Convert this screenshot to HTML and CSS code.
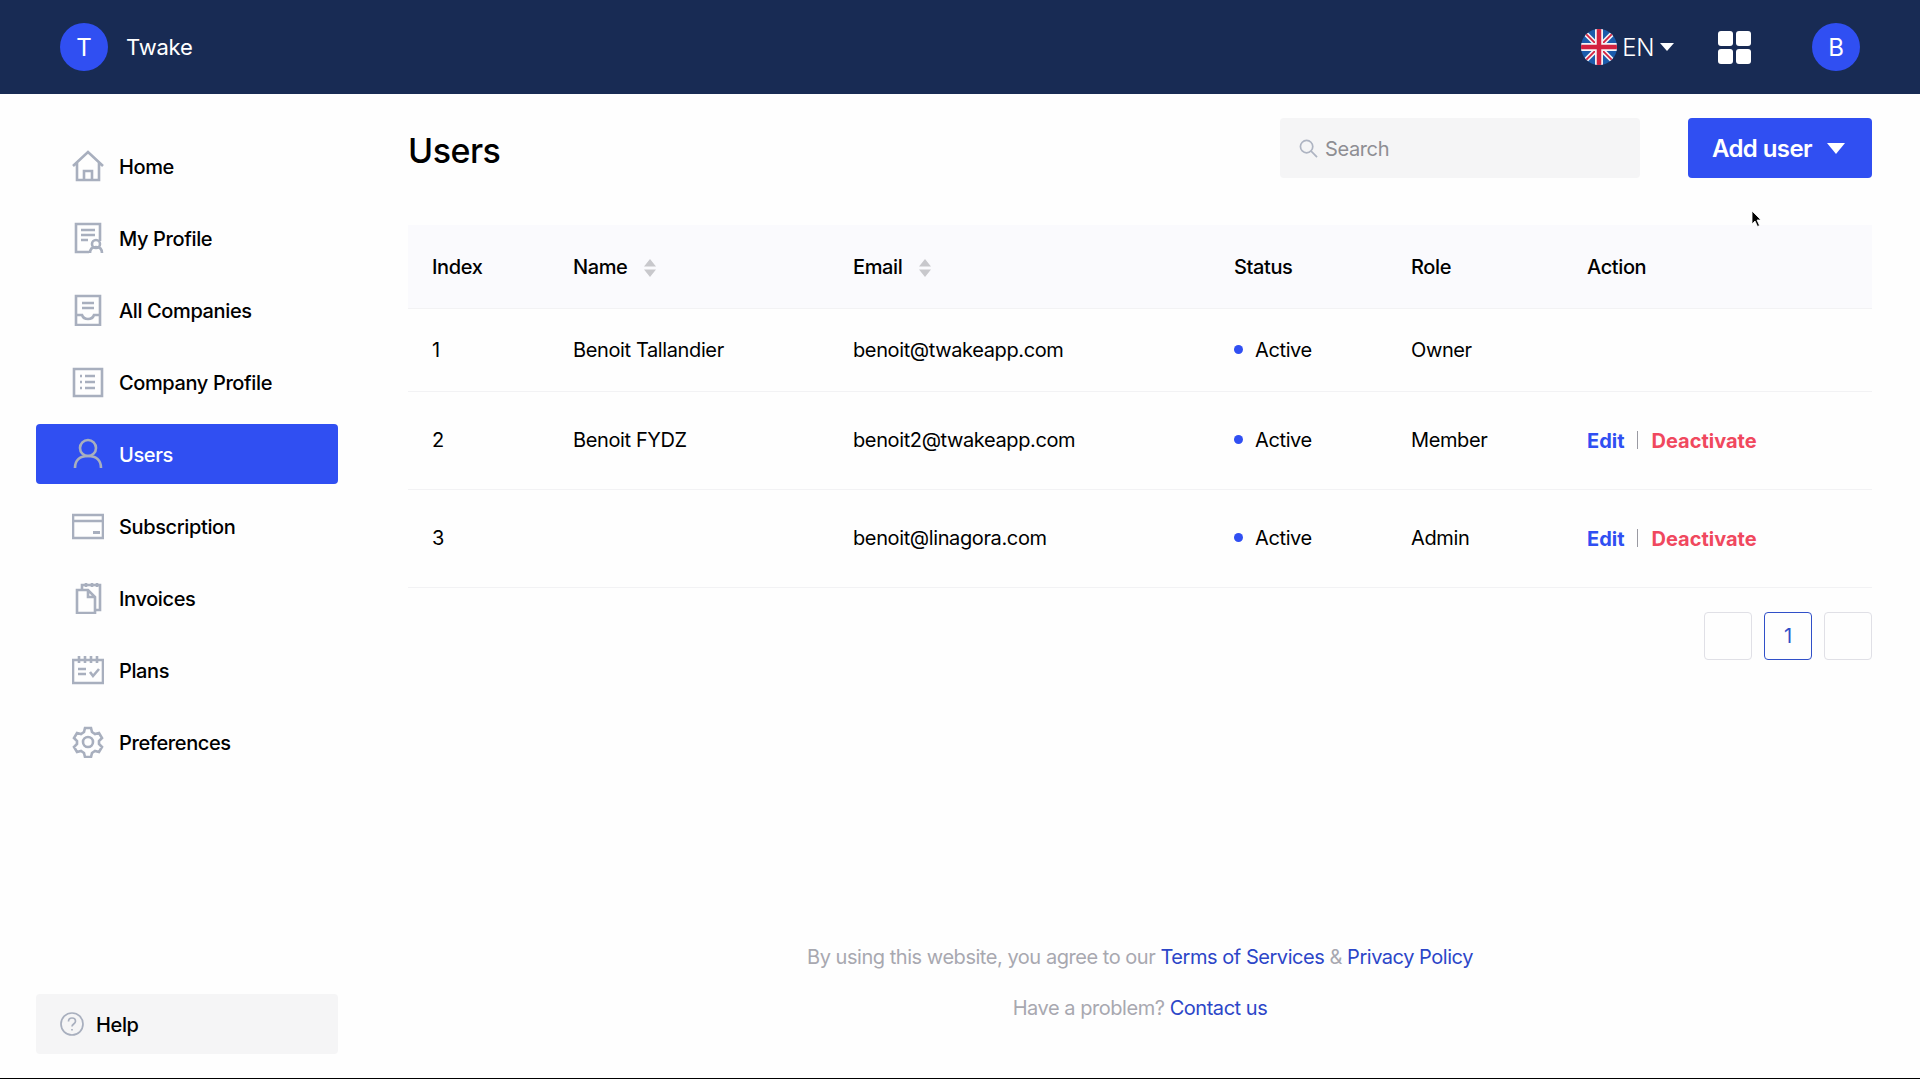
FILE: index.html
```html
<!DOCTYPE html>
<html lang="en">
<head>
  <meta charset="UTF-8">
  <title>Users - Twake</title>
  <link rel="stylesheet" href="styles.css">
</head>
<body>
  <header class="topbar">
    <div class="brand">
      <span class="avatar">T</span>
      <span class="brand-name">Twake</span>
    </div>
    <div class="topbar-right">
      <div class="lang">
        <svg class="flag" viewBox="0 0 36 36">
          <defs><clipPath id="flag-clip"><circle cx="18" cy="18" r="18"/></clipPath></defs>
          <g clip-path="url(#flag-clip)">
            <rect width="36" height="36" fill="#1b5bab"/>
            <path d="M0 0L36 36M36 0L0 36" stroke="#f4f4f6" stroke-width="5"/>
            <path d="M0 0L36 36M36 0L0 36" stroke="#d32240" stroke-width="1.800"/>
            <path d="M18 0V36M0 18H36" stroke="#f4f4f6" stroke-width="8"/>
            <path d="M18 0V36M0 18H36" stroke="#d32240" stroke-width="4.500"/>
          </g>
        </svg>
        <span class="lang-code">EN</span>
        <span class="caret caret-small"></span>
      </div>
      <div class="apps">
        <span></span><span></span><span></span><span></span>
      </div>
      <span class="avatar">B</span>
    </div>
  </header>

  <div class="layout">
    <aside class="sidebar">
      <nav class="nav">
        <a class="nav-item">
          <svg class="nav-icon" viewBox="0 0 32 32"><path d="M1 16L16 2l15 14M5 13v17h22V13M12 30v-9h8v9"/></svg>
          <span>Home</span>
        </a>
        <a class="nav-item">
          <svg class="nav-icon" viewBox="0 0 32 32"><path d="M17 30H4V2h24v17M9 8h14M9 13h14M9 18h7"/><circle cx="24" cy="22" r="4"/><path d="M18 31c0-4 2.500-6 6-6s6 2 6 6"/></svg>
          <span>My Profile</span>
        </a>
        <a class="nav-item">
          <svg class="nav-icon" viewBox="0 0 32 32"><path d="M4 2h24v29H4zM10 9h12M10 14h12M4 21h6c1 3 3 4 6 4s5-1 6-4h6"/></svg>
          <span>All Companies</span>
        </a>
        <a class="nav-item">
          <svg class="nav-icon" viewBox="0 0 32 32"><path d="M2 3h28v27H2zM13 10h10M13 16h10M13 22h10M8 10h2M8 16h2M8 22h2"/></svg>
          <span>Company Profile</span>
        </a>
        <a class="nav-item active">
          <svg class="nav-icon" viewBox="0 0 32 32"><circle cx="16" cy="10" r="8"/><path d="M3 30c0-8 5-12 13-12s13 4 13 12"/></svg>
          <span>Users</span>
        </a>
        <a class="nav-item">
          <svg class="nav-icon" viewBox="0 0 32 32"><path d="M1 5h30v23H1zM1 11h30"/><path class="solid" d="M21 21h7v3h-7z"/></svg>
          <span>Subscription</span>
        </a>
        <a class="nav-item">
          <svg class="nav-icon" viewBox="0 0 32 32"><path d="M10 7V3h18v25h-5M14 1v4M20 1v4M25 1v4"/><path d="M5 8h11l7 7v16H5zM16 8v7h7"/></svg>
          <span>Invoices</span>
        </a>
        <a class="nav-item">
          <svg class="nav-icon" viewBox="0 0 32 32"><path d="M1 6h30v23H1zM7 2v7M13 2v7M19 2v7M25 2v7M6 15h8M6 20h8M18 18l3 4 6-7"/></svg>
          <span>Plans</span>
        </a>
        <a class="nav-item">
          <svg class="nav-icon" viewBox="0 0 32 32"><circle cx="16" cy="16" r="5"/><path d="M13 2h6l1 4 3 2 4-1 3 5-3 3v3l3 3-3 5-4-1-3 2-1 4h-6l-1-4-3-2-4 1-3-5 3-3v-3L2 12l3-5 4 1 3-2z"/></svg>
          <span>Preferences</span>
        </a>
      </nav>
      <a class="help">
        <svg class="help-icon" viewBox="0 0 24 24"><circle cx="12" cy="12" r="11"/><path d="M8.500 9.500c0-2 1.500-3.500 3.500-3.500s3.500 1.500 3.500 3.300c0 2.700-3.500 2.700-3.500 5.200M12 17v1.500"/></svg>
        <span>Help</span>
      </a>
    </aside>

    <main class="content">
      <div class="page-head">
        <h1>Users</h1>
        <div class="search">
          <svg class="search-icon" viewBox="0 0 20 20"><circle cx="8" cy="8" r="6.500"/><path d="M12.500 12.500L19 19"/></svg>
          <span>Search</span>
        </div>
        <button class="add-btn">Add user <span class="caret"></span></button>
      </div>

      <table class="users">
        <thead>
          <tr>
            <th class="col-index">Index</th>
            <th class="col-name">Name <svg class="sort" viewBox="0 0 12 18"><path d="M6 0l6 7.500H0zM0 10.500h12L6 18z"/></svg></th>
            <th class="col-email">Email <svg class="sort" viewBox="0 0 12 18"><path d="M6 0l6 7.500H0zM0 10.500h12L6 18z"/></svg></th>
            <th class="col-status">Status</th>
            <th class="col-role">Role</th>
            <th>Action</th>
          </tr>
        </thead>
        <tbody>
          <tr class="row-short">
            <td>1</td>
            <td>Benoit Tallandier</td>
            <td>benoit@twakeapp.com</td>
            <td><span class="dot"></span>Active</td>
            <td>Owner</td>
            <td></td>
          </tr>
          <tr>
            <td>2</td>
            <td>Benoit FYDZ</td>
            <td>benoit2@twakeapp.com</td>
            <td><span class="dot"></span>Active</td>
            <td>Member</td>
            <td><a class="link-edit">Edit</a><span class="sep"></span><a class="link-off">Deactivate</a></td>
          </tr>
          <tr>
            <td>3</td>
            <td></td>
            <td>benoit@linagora.com</td>
            <td><span class="dot"></span>Active</td>
            <td>Admin</td>
            <td><a class="link-edit">Edit</a><span class="sep"></span><a class="link-off">Deactivate</a></td>
          </tr>
        </tbody>
      </table>

      <div class="pager">
        <span class="page"></span>
        <span class="page current">1</span>
        <span class="page"></span>
      </div>

      <footer class="foot">
        <p>By using this website, you agree to our <a>Terms of Services</a> &amp; <a>Privacy Policy</a></p>
        <p>Have a problem? <a>Contact us</a></p>
      </footer>
    </main>
  </div>

  <!-- cursor in the screenshot -->
  <svg class="cursor" viewBox="0 0 12 18"><path d="M1 1v13l3-3 2.500 5.500 2-1L6 10h4z" fill="#000" stroke="#fff" stroke-width="0.800"/></svg>
</body>
</html>
```

FILE: styles.css
```css
* {
  box-sizing: border-box;
}

html, body {
  margin: 0;
  padding: 0;
  height: 100%;
}

body {
  font-family: 'Inter', 'Liberation Sans', sans-serif;
  font-size: 20px;
  letter-spacing: -0.38px;
  color: #000;
  background-color: #fefefe;
  display: flex;
  flex-direction: column;
  overflow: hidden;
  border-bottom: 1px solid #000;
}

.topbar {
  height: 94px;
  flex: none;
  background-color: #182b54;
  color: #fff;
  display: flex;
  align-items: center;
  justify-content: space-between;
  padding: 0 60px;
}

.brand {
  display: flex;
  align-items: center;
  gap: 18px;
}

.brand-name {
  font-size: 22px;
  font-weight: 400;
  letter-spacing: -0.2px;
}

.avatar {
  width: 48px;
  height: 48px;
  border-radius: 50%;
  background-color: #304ff2;
  color: #fff;
  display: flex;
  align-items: center;
  justify-content: center;
  font-size: 24px;
  font-weight: 400;
  letter-spacing: 0;
}

.topbar-right {
  display: flex;
  align-items: center;
}

.lang {
  display: flex;
  align-items: center;
  margin-right: 44px;
}

.flag {
  width: 36px;
  height: 36px;
}

.lang-code {
  font-size: 24px;
  font-weight: 300;
  margin-left: 5px;
  margin-right: 6px;
}

.caret {
  display: inline-block;
  border-left: 9px solid transparent;
  border-right: 9px solid transparent;
  border-top: 11px solid #fff;
}

.caret-small {
  border-left-width: 7px;
  border-right-width: 7px;
  border-top-width: 8px;
}

.apps {
  display: grid;
  grid-template-columns: 15px 15px;
  gap: 3px;
  margin-right: 61px;
}

.apps span {
  height: 15px;
  background-color: #fff;
  border-radius: 3px;
}

.layout {
  flex: 1;
  display: flex;
  min-height: 0;
}

.sidebar {
  width: 374px;
  padding: 42px 36px 24px;
  flex: none;
  display: flex;
  flex-direction: column;
  justify-content: space-between;
}

.nav {
  display: flex;
  flex-direction: column;
  gap: 12px;
}

.nav-item {
  height: 60px;
  padding-left: 36px;
  border-radius: 4px;
  display: flex;
  align-items: center;
  gap: 15px;
  font-weight: 500;
}

.nav-item span,
.help span {
  padding-top: 2px;
}

.nav-item.active {
  background-color: #304ff2;
  color: #fff;
}

.nav-icon {
  width: 32px;
  height: 32px;
  fill: none;
  stroke: #a8afbe;
  stroke-width: 2.600;
}

.nav-icon .solid {
  fill: #a8afbe;
  stroke: none;
}

.help {
  height: 60px;
  padding-left: 24px;
  border-radius: 4px;
  background-color: #f5f5f6;
  display: flex;
  align-items: center;
  gap: 12px;
  font-weight: 500;
}

.help-icon {
  width: 24px;
  height: 24px;
  fill: none;
  stroke: #a8afbe;
  stroke-width: 1.700;
}

.content {
  flex: 1;
  padding: 24px 48px 0 34px;
  display: flex;
  flex-direction: column;
  position: relative;
  min-width: 0;
}

.page-head {
  height: 60px;
  display: flex;
  align-items: center;
}

.page-head h1 {
  margin: 0;
  font-size: 34px;
  font-weight: 500;
  letter-spacing: -0.5px;
  flex: 1;
  padding-top: 4px;
}

.search {
  width: 360px;
  height: 60px;
  background-color: #f5f5f6;
  border-radius: 4px;
  padding-left: 19px;
  display: flex;
  align-items: center;
  gap: 7px;
  color: #8e8e93;
  margin-right: 48px;
}

.search span {
  padding-top: 2px;
}

.search-icon {
  width: 19px;
  height: 19px;
  fill: none;
  stroke: #aeb4c2;
  stroke-width: 1.800;
}

.add-btn {
  width: 184px;
  height: 60px;
  padding: 0 0 0 24px;
  border: none;
  border-radius: 4px;
  background-color: #304ff2;
  color: #fff;
  font-family: inherit;
  font-size: 24px;
  font-weight: 600;
  letter-spacing: -0.6px;
  display: flex;
  align-items: center;
  gap: 15px;
}

.users {
  width: 100%;
  margin-top: 47px;
  border-collapse: collapse;
  table-layout: fixed;
}

.users th {
  height: 83px;
  background-color: #fafafd;
  text-align: left;
  font-weight: 500;
  padding: 2px 0 0 24px;
  border-bottom: 1px solid #f2f2f4;
}

.users td {
  height: 98px;
  padding: 0 0 0 24px;
  border-bottom: 1px solid #f2f2f4;
}

.row-short td {
  height: 83px;
}

.col-index { width: 141px; }
.col-name { width: 280px; }
.col-email { width: 381px; }
.col-status { width: 177px; }
.col-role { width: 176px; }

.sort {
  width: 12px;
  height: 18px;
  margin-left: 12px;
  vertical-align: -3px;
  fill: #c8c8cc;
}

.dot {
  display: inline-block;
  width: 9px;
  height: 9px;
  border-radius: 50%;
  background-color: #304ff2;
  margin-right: 12px;
  vertical-align: 3px;
}

.link-edit,
.link-off {
  font-weight: 700;
  letter-spacing: 0;
  position: relative;
  top: 1px;
}

.link-edit {
  color: #304ff2;
}

.link-off {
  color: #f0485e;
}

.sep {
  display: inline-block;
  width: 1px;
  height: 18px;
  background-color: #9a9aa2;
  margin: 0 14px 0 12px;
  vertical-align: -2px;
}

.pager {
  display: flex;
  justify-content: flex-end;
  gap: 12px;
  margin-top: 24px;
}

.page {
  width: 48px;
  height: 48px;
  border: 1px solid #e0e0e6;
  border-radius: 4px;
  display: flex;
  align-items: center;
  justify-content: center;
  color: #304fc8;
}

.page.current {
  border-color: #304fc8;
}

.foot {
  position: absolute;
  left: 34px;
  right: 48px;
  bottom: 44px;
  text-align: center;
  color: #a8a8b0;
  letter-spacing: -0.46px;
}

.foot p {
  margin: 0;
  line-height: 51px;
}

.foot a {
  color: #2c46c8;
}

.cursor {
  position: absolute;
  left: 1751px;
  top: 210px;
  width: 12px;
  height: 18px;
}
```
